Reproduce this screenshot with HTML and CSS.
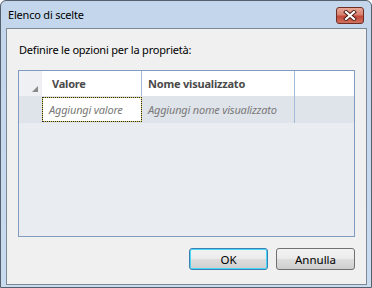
FILE: index.html
```html
<!DOCTYPE html>
<html lang="it">
<head>
  <meta charset="UTF-8">
  <title>Elenco di scelte</title>
  <link rel="stylesheet" href="styles.css">
</head>
<body>
  <div class="window">
    <div class="titlebar">
      <span class="title">Elenco di scelte</span>
      <div class="close">
        <svg width="14" height="11" viewBox="0 0 14 11">
          <path d="M3 2 L11 9 M11 2 L3 9" stroke="#4a1a12" stroke-width="4" stroke-linecap="square"/>
          <path d="M3 2 L11 9 M11 2 L3 9" stroke="#ffffff" stroke-width="2.2" stroke-linecap="square"/>
        </svg>
      </div>
    </div>

    <div class="client">
      <p class="label">Definire le opzioni per la proprietà:</p>

      <div class="grid">
        <div class="row header">
          <div class="rowhead">
            <svg width="6" height="6" viewBox="0 0 6 6"><polygon points="6,0 6,6 0,6" fill="#8a8a8a"/></svg>
          </div>
          <div class="cell col1">Valore</div>
          <div class="cell col2">Nome visualizzato</div>
          <div class="cell filler"></div>
        </div>
        <div class="row data">
          <div class="rowhead"></div>
          <div class="cell col1 focused">Aggiungi valore</div>
          <div class="cell col2">Aggiungi nome visualizzato</div>
          <div class="cell filler"></div>
        </div>
      </div>

      <div class="buttons">
        <button class="default">OK</button>
        <button>Annulla</button>
      </div>
    </div>
  </div>
</body>
</html>
```

FILE: styles.css
```css
body {
  margin: 0;
  font-family: "Noto Sans", "Open Sans", sans-serif;
  font-size: 11px;
  letter-spacing: -0.2px;
  color: #000;
  background: #fff;
}

.window {
  width: 370px;
  height: 286px;
  border: 1px solid #55606e;
  border-radius: 6px 6px 0 0;
  background: linear-gradient(#c3d6ec, #c9dbef);
  display: flex;
  flex-direction: column;
}

.titlebar {
  height: 27px;
  display: flex;
  align-items: center;
  justify-content: space-between;
  padding: 0 7px 0 7px;
}

.title {
  color: #000;
  margin-top: -1px;
}

.close {
  width: 26px;
  height: 15px;
  margin-top: 1px;
  border: 1px solid #6e2e25;
  border-radius: 3px;
  background: linear-gradient(#e8a898 0%, #d7806f 45%, #c2473a 55%, #d0705e 100%);
  display: flex;
  align-items: center;
  justify-content: center;
}

.client {
  margin: 0 4px 2px 5px;
  flex: 1;
  background: #f0f0f0;
  border: 1px solid #7d8896;
  padding: 13px 11px 14px 11px;
  display: flex;
  flex-direction: column;
}

.label {
  margin: 0 0 12px 1px;
  height: 16px;
  line-height: 16px;
}

.grid {
  height: 165px;
  border: 1px solid #7f9cc0;
  background: #e9ecf0;
}

.row {
  display: flex;
}

.header {
  height: 25px;
  background: #fff;
}

.data {
  height: 27px;
  background: #dfe3ea;
}

.rowhead {
  width: 23px;
  display: flex;
  align-items: flex-end;
  justify-content: flex-end;
  padding: 0 4px 4px 0;
  box-sizing: border-box;
}

.header .rowhead {
  background: #eef0f3;
}

.cell {
  display: flex;
  align-items: center;
  box-sizing: border-box;
  white-space: nowrap;
}

.col1 {
  width: 100px;
  padding-left: 10px;
  border-right: 1px solid #a3bad6;
}

.col2 {
  width: 153px;
  padding-left: 6px;
  border-right: 1px solid #a3bad6;
}

.filler {
  flex: 1;
}

.header .cell {
  font-weight: bold;
  color: #4a4a4a;
}

.data .cell {
  font-style: italic;
  color: #7a7a7a;
}

.data .focused {
  padding-left: 6px;
  margin: 1px 0 1px 0;
  border: 1px dotted #2a2a2a;
  background: linear-gradient(#fff, #fff) padding-box, #d8cc58 border-box;
  width: 100px;
}

.buttons {
  display: flex;
  justify-content: flex-end;
  gap: 8px;
  margin-top: 11px;
}

button {
  width: 79px;
  height: 22px;
  font-family: inherit;
  font-size: 11.5px;
  color: #000;
  border: 1px solid #707070;
  border-radius: 3px;
  background: linear-gradient(#f2f2f2 0%, #ebebeb 50%, #dddddd 51%, #cfcfcf 100%);
  padding: 0;
}

button.default {
  border-color: #3c7fb1;
  box-shadow: inset 0 0 0 1px #48d8f6;
}
```
